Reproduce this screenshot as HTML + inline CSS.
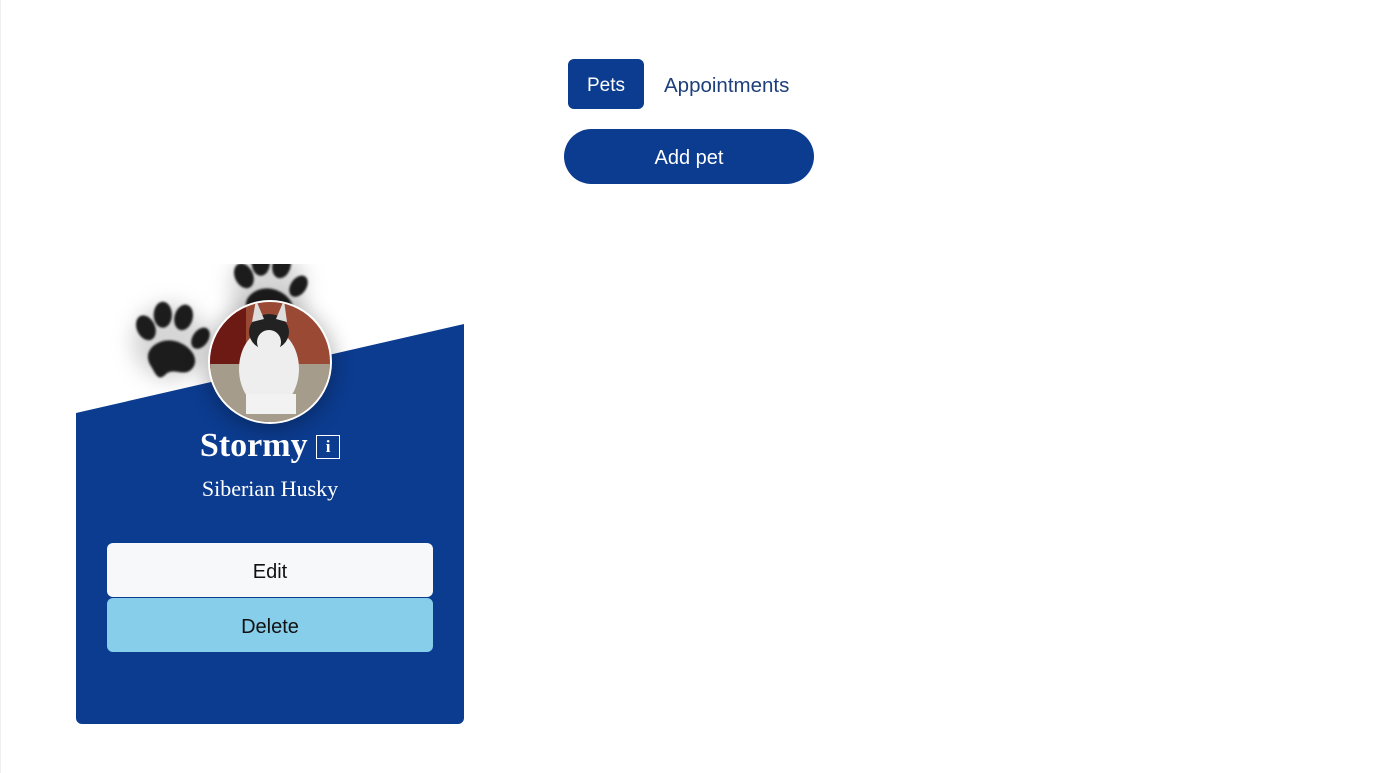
<!DOCTYPE html>
<html><head><style>
body{margin:0;width:1374px;height:773px;background:#fff;position:relative;overflow:hidden;font-family:"Liberation Sans",sans-serif}
.abs{position:absolute}
.pets{left:568px;top:59px;width:76px;height:50px;background:#0c3c90;border-radius:6px;color:#fff;font-size:19px;line-height:53px;text-align:center}
.appt{left:664px;top:59px;height:50px;line-height:53px;color:#1d3f7a;font-size:20.5px}
.add{left:564px;top:129px;width:250px;height:55px;background:#0c3c90;border-radius:28px;color:#fff;font-size:20px;line-height:59px;text-align:center}
.card{left:76px;top:264px;width:388px;height:460px;border-radius:0 0 6px 6px;overflow:hidden}
.btn{position:absolute;left:31px;width:326px;height:54px;border-radius:6px;font-size:20px;line-height:58px;text-align:center;color:#111}
</style></head><body>
<div class="abs" style="left:0;top:0;width:1px;height:773px;background:#eee"></div>
<div class="abs pets">Pets</div>
<div class="abs appt">Appointments</div>
<div class="abs add">Add pet</div>
<div class="abs card">
<svg width="388" height="460" style="position:absolute;left:0;top:0">
<defs><filter id="b" x="-50%" y="-50%" width="200%" height="200%"><feGaussianBlur stdDeviation="1"/></filter>
<filter id="s" x="-50%" y="-50%" width="200%" height="200%"><feGaussianBlur stdDeviation="10"/></filter>
<g id="paw"><ellipse cx="-17" cy="-14" rx="7" ry="10" transform="rotate(-25 -17 -14)"/><ellipse cx="-4" cy="-24" rx="7" ry="10"/><ellipse cx="12" cy="-22" rx="7" ry="10" transform="rotate(15 12 -22)"/><ellipse cx="25" cy="-6" rx="6" ry="9" transform="rotate(35 25 -6)"/><path d="M-14 14 C-20 2 -6 -6 4 -4 C16 -2 26 10 18 18 C12 24 4 16 -2 22 C-8 28 -10 20 -14 14Z"/></g></defs>
<g fill="#bbb" opacity=".6" filter="url(#s)"><circle cx="94" cy="78" r="38"/><circle cx="192" cy="24" r="38"/></g>
<g fill="#1a1a1a" filter="url(#b)"><use href="#paw" transform="translate(92,82) scale(1.3)"/><use href="#paw" transform="translate(190,30) scale(1.3)"/></g>
<polygon points="0,149 388,60 388,460 0,460" fill="#0c3c90"/>
<circle cx="194" cy="102" r="66" fill="#000" opacity=".25" filter="url(#s)"/>
<circle cx="194" cy="98" r="62" fill="#fff"/>
<clipPath id="c"><circle cx="194" cy="98" r="60"/></clipPath>
<g clip-path="url(#c)">
<rect x="130" y="36" width="130" height="130" fill="#9a4a34"/>
<rect x="134" y="36" width="36" height="70" fill="#6e1a14"/>
<rect x="130" y="100" width="130" height="70" fill="#a59c8c"/>
<ellipse cx="193" cy="105" rx="30" ry="40" fill="#eee"/>
<ellipse cx="193" cy="68" rx="20" ry="18" fill="#222"/>
<ellipse cx="193" cy="78" rx="12" ry="12" fill="#eee"/>
<polygon points="176,58 180,36 188,55" fill="#ddd"/><polygon points="200,55 208,36 211,58" fill="#ddd"/>
<rect x="170" y="130" width="50" height="20" fill="#f2f2f2"/>
</g>
</svg>
<div style="position:absolute;left:0;width:388px;top:163px;text-align:center;color:#fff;font-family:'Liberation Serif',serif;font-weight:bold;font-size:34px">Stormy <span style="display:inline-block;width:22px;height:22px;border:1px solid #fff;font-size:17px;line-height:22px;vertical-align:4px">i</span></div>
<div style="position:absolute;left:0;width:388px;top:212px;text-align:center;color:#fff;font-family:'Liberation Serif',serif;font-size:22px">Siberian Husky</div>
<div class="btn" style="top:279px;background:#f7f8fa">Edit</div>
<div class="btn" style="top:334px;background:#87ceea">Delete</div>
</div>
</body></html>
